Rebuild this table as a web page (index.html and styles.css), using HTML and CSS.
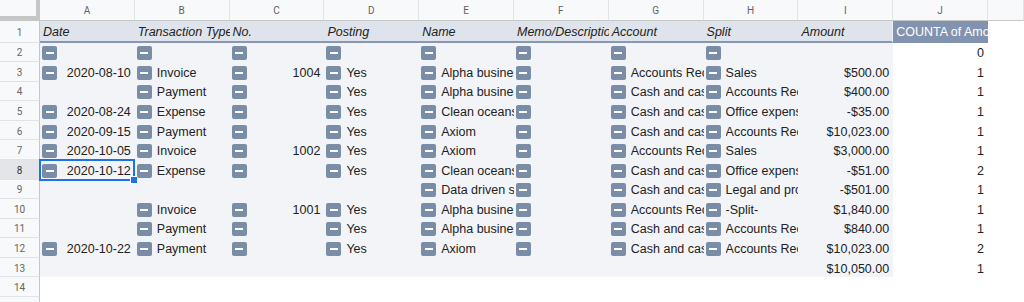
FILE: index.html
```html
<!DOCTYPE html>
<html>
<head>
<meta charset="utf-8">
<link rel="stylesheet" href="styles.css">
</head>
<body>
<div class="sheet">
  <div class="corner"></div>
  <div class="ch">A</div><div class="ch">B</div><div class="ch">C</div><div class="ch">D</div><div class="ch">E</div>
  <div class="ch">F</div><div class="ch">G</div><div class="ch">H</div><div class="ch">I</div><div class="ch">J</div><div class="ch last"></div>

  <div class="rh">1</div>
  <div class="c h">Date</div><div class="c h">Transaction Type</div><div class="c h">No.</div><div class="c h">Posting</div><div class="c h">Name</div>
  <div class="c h">Memo/Description</div><div class="c h">Account</div><div class="c h">Split</div><div class="c h hi">Amount</div><div class="c hj">COUNTA of Amount</div><div class="c w"></div>

  <div class="rh">2</div>
  <div class="c b"><i class="m"></i></div><div class="c b"><i class="m"></i></div><div class="c b"><i class="m"></i></div><div class="c b"><i class="m"></i></div><div class="c b"><i class="m"></i></div>
  <div class="c b"><i class="m"></i></div><div class="c b"><i class="m"></i></div><div class="c b"><i class="m"></i></div><div class="c b"></div><div class="c w r"><span class="t">0</span></div><div class="c w"></div>

  <div class="rh">3</div>
  <div class="c b r"><i class="m"></i><span class="t">2020-08-10</span></div><div class="c b"><i class="m"></i><span class="t">Invoice</span></div><div class="c b r"><i class="m"></i><span class="t">1004</span></div><div class="c b"><i class="m"></i><span class="t">Yes</span></div><div class="c b"><i class="m"></i><span class="t">Alpha business</span></div>
  <div class="c b"><i class="m"></i></div><div class="c b"><i class="m"></i><span class="t">Accounts Receivable (A/R)</span></div><div class="c b"><i class="m"></i><span class="t">Sales</span></div><div class="c b r"><span class="t">$500.00</span></div><div class="c w r"><span class="t">1</span></div><div class="c w"></div>

  <div class="rh">4</div>
  <div class="c b"></div><div class="c b"><i class="m"></i><span class="t">Payment</span></div><div class="c b"><i class="m"></i></div><div class="c b"><i class="m"></i><span class="t">Yes</span></div><div class="c b"><i class="m"></i><span class="t">Alpha business</span></div>
  <div class="c b"><i class="m"></i></div><div class="c b"><i class="m"></i><span class="t">Cash and cash equivalents</span></div><div class="c b"><i class="m"></i><span class="t">Accounts Receivable (A/R)</span></div><div class="c b r"><span class="t">$400.00</span></div><div class="c w r"><span class="t">1</span></div><div class="c w"></div>

  <div class="rh">5</div>
  <div class="c b r"><i class="m"></i><span class="t">2020-08-24</span></div><div class="c b"><i class="m"></i><span class="t">Expense</span></div><div class="c b"><i class="m"></i></div><div class="c b"><i class="m"></i><span class="t">Yes</span></div><div class="c b"><i class="m"></i><span class="t">Clean oceans inc</span></div>
  <div class="c b"><i class="m"></i></div><div class="c b"><i class="m"></i><span class="t">Cash and cash equivalents</span></div><div class="c b"><i class="m"></i><span class="t">Office expenses</span></div><div class="c b r"><span class="t">-$35.00</span></div><div class="c w r"><span class="t">1</span></div><div class="c w"></div>

  <div class="rh">6</div>
  <div class="c b r"><i class="m"></i><span class="t">2020-09-15</span></div><div class="c b"><i class="m"></i><span class="t">Payment</span></div><div class="c b"><i class="m"></i></div><div class="c b"><i class="m"></i><span class="t">Yes</span></div><div class="c b"><i class="m"></i><span class="t">Axiom</span></div>
  <div class="c b"><i class="m"></i></div><div class="c b"><i class="m"></i><span class="t">Cash and cash equivalents</span></div><div class="c b"><i class="m"></i><span class="t">Accounts Receivable (A/R)</span></div><div class="c b r"><span class="t">$10,023.00</span></div><div class="c w r"><span class="t">1</span></div><div class="c w"></div>

  <div class="rh">7</div>
  <div class="c b r"><i class="m"></i><span class="t">2020-10-05</span></div><div class="c b"><i class="m"></i><span class="t">Invoice</span></div><div class="c b r"><i class="m"></i><span class="t">1002</span></div><div class="c b"><i class="m"></i><span class="t">Yes</span></div><div class="c b"><i class="m"></i><span class="t">Axiom</span></div>
  <div class="c b"><i class="m"></i></div><div class="c b"><i class="m"></i><span class="t">Accounts Receivable (A/R)</span></div><div class="c b"><i class="m"></i><span class="t">Sales</span></div><div class="c b r"><span class="t">$3,000.00</span></div><div class="c w r"><span class="t">1</span></div><div class="c w"></div>

  <div class="rh sel-row">8</div>
  <div class="c b r sel"><i class="m"></i><span class="t">2020-10-12</span></div><div class="c b"><i class="m"></i><span class="t">Expense</span></div><div class="c b"><i class="m"></i></div><div class="c b"><i class="m"></i><span class="t">Yes</span></div><div class="c b"><i class="m"></i><span class="t">Clean oceans inc</span></div>
  <div class="c b"><i class="m"></i></div><div class="c b"><i class="m"></i><span class="t">Cash and cash equivalents</span></div><div class="c b"><i class="m"></i><span class="t">Office expenses</span></div><div class="c b r"><span class="t">-$51.00</span></div><div class="c w r"><span class="t">2</span></div><div class="c w"></div>

  <div class="rh">9</div>
  <div class="c b"></div><div class="c b"></div><div class="c b"></div><div class="c b"></div><div class="c b"><i class="m"></i><span class="t">Data driven solutions</span></div>
  <div class="c b"><i class="m"></i></div><div class="c b"><i class="m"></i><span class="t">Cash and cash equivalents</span></div><div class="c b"><i class="m"></i><span class="t">Legal and professional fees</span></div><div class="c b r"><span class="t">-$501.00</span></div><div class="c w r"><span class="t">1</span></div><div class="c w"></div>

  <div class="rh">10</div>
  <div class="c b"></div><div class="c b"><i class="m"></i><span class="t">Invoice</span></div><div class="c b r"><i class="m"></i><span class="t">1001</span></div><div class="c b"><i class="m"></i><span class="t">Yes</span></div><div class="c b"><i class="m"></i><span class="t">Alpha business</span></div>
  <div class="c b"><i class="m"></i></div><div class="c b"><i class="m"></i><span class="t">Accounts Receivable (A/R)</span></div><div class="c b"><i class="m"></i><span class="t">-Split-</span></div><div class="c b r"><span class="t">$1,840.00</span></div><div class="c w r"><span class="t">1</span></div><div class="c w"></div>

  <div class="rh">11</div>
  <div class="c b"></div><div class="c b"><i class="m"></i><span class="t">Payment</span></div><div class="c b"><i class="m"></i></div><div class="c b"><i class="m"></i><span class="t">Yes</span></div><div class="c b"><i class="m"></i><span class="t">Alpha business</span></div>
  <div class="c b"><i class="m"></i></div><div class="c b"><i class="m"></i><span class="t">Cash and cash equivalents</span></div><div class="c b"><i class="m"></i><span class="t">Accounts Receivable (A/R)</span></div><div class="c b r"><span class="t">$840.00</span></div><div class="c w r"><span class="t">1</span></div><div class="c w"></div>

  <div class="rh">12</div>
  <div class="c b r"><i class="m"></i><span class="t">2020-10-22</span></div><div class="c b"><i class="m"></i><span class="t">Payment</span></div><div class="c b"><i class="m"></i></div><div class="c b"><i class="m"></i><span class="t">Yes</span></div><div class="c b"><i class="m"></i><span class="t">Axiom</span></div>
  <div class="c b"><i class="m"></i></div><div class="c b"><i class="m"></i><span class="t">Cash and cash equivalents</span></div><div class="c b"><i class="m"></i><span class="t">Accounts Receivable (A/R)</span></div><div class="c b r"><span class="t">$10,023.00</span></div><div class="c w r"><span class="t">2</span></div><div class="c w"></div>

  <div class="rh">13</div>
  <div class="c b"></div><div class="c b"></div><div class="c b"></div><div class="c b"></div><div class="c b"></div>
  <div class="c b"></div><div class="c b"></div><div class="c b"></div><div class="c b r"><span class="t">$10,050.00</span></div><div class="c w r"><span class="t">1</span></div><div class="c w"></div>

  <div class="rh">14</div>
  <div class="c w"></div><div class="c w"></div><div class="c w"></div><div class="c w"></div><div class="c w"></div>
  <div class="c w"></div><div class="c w"></div><div class="c w"></div><div class="c w"></div><div class="c w"></div><div class="c w"></div>

  <div class="rh">15</div>
  <div class="c w"></div><div class="c w"></div><div class="c w"></div><div class="c w"></div><div class="c w"></div>
  <div class="c w"></div><div class="c w"></div><div class="c w"></div><div class="c w"></div><div class="c w"></div><div class="c w"></div>
</div>
</body>
</html>
```

FILE: styles.css
```css
* {
  box-sizing: border-box;
  margin: 0;
  padding: 0;
}

body {
  margin: 0;
  background: #ffffff;
  font-family: "Liberation Sans", Arial, sans-serif;
  font-size: 12.5px;
  color: #222222;
  overflow: hidden;
}

.sheet {
  display: grid;
  grid-template-columns: 40px repeat(10, 94.8px) 1fr;
  grid-template-rows: 21px 21.5px repeat(14, 19.58px);
  width: 1024px;
}

.corner {
  background: #f8f9fa;
  border-right: 4px solid #c4c7c5;
  border-bottom: 5px solid #c4c7c5;
}

.ch {
  background: #f8f9fa;
  border-right: 1px solid #e1e3e6;
  border-bottom: 1px solid #c4c7c5;
  color: #5f6368;
  font-family: Roboto, "Liberation Sans", sans-serif;
  font-size: 10px;
  display: flex;
  align-items: center;
  justify-content: center;
  padding-top: 1px;
}

.rh {
  background: #f8f9fa;
  border-right: 1px solid #c4c7c5;
  border-bottom: 1px solid #e1e3e6;
  color: #666;
  font-family: Roboto, "Liberation Sans", sans-serif;
  font-size: 10px;
  display: flex;
  align-items: center;
  justify-content: center;
  padding-top: 2px;
}

.rh.sel-row {
  background: #e3e5e8;
  color: #333;
}

.c {
  display: flex;
  align-items: center;
  overflow: hidden;
  white-space: nowrap;
  padding: 2px 0 0 2px;
  min-width: 0;
}

.h {
  background: #dfe3eb;
  border-bottom: 2px solid #8898b3;
  font-style: italic;
  padding-left: 3px;
  padding-top: 3px;
}

.h.hi {
  border-right: 1px solid #eef0f4;
}

.hj {
  background: #8193af;
  border-bottom: 2px solid #8193af;
  color: #ffffff;
  padding-left: 3px;
  padding-top: 3px;
}

.b {
  background: #f3f4f7;
}

.w {
  background: #ffffff;
}

.m {
  flex: none;
  width: 15px;
  height: 14px;
  border-radius: 2px;
  background: #7a8da7;
  position: relative;
  margin-top: 0;
}

.m::after {
  content: "";
  position: absolute;
  left: 3.5px;
  top: 6px;
  width: 8px;
  height: 2px;
  background: #ffffff;
}

.t {
  flex: 1;
  min-width: 0;
  overflow: hidden;
  margin-left: 5px;
}

.r .t {
  text-align: right;
  padding-right: 4px;
}

.c.r > .t:first-child {
  margin-left: 0;
}

.sel {
  position: relative;
  overflow: visible;
}

.sel::before {
  content: "";
  position: absolute;
  left: -1px;
  top: -1px;
  right: 0;
  bottom: -1px;
  border: 2px solid #1a73e8;
  pointer-events: none;
}

.sel::after {
  content: "";
  position: absolute;
  right: -3px;
  bottom: -4px;
  width: 6px;
  height: 6px;
  background: #1a73e8;
  border: 1px solid #ffffff;
}
```
